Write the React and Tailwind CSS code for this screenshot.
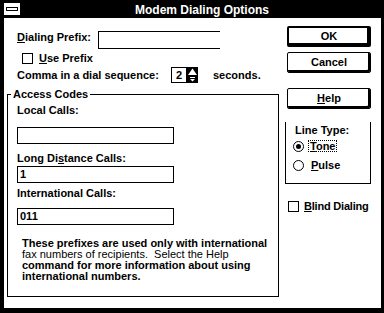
import React from "react";

const font = "font-['Liberation_Sans',Arial,sans-serif]";

function Check({ checked }) {
  return (
    <span className="block w-[11px] h-[11px] border border-black bg-white shrink-0">
      {checked ? "x" : null}
    </span>
  );
}

function Radio({ on }) {
  return (
    <span className="flex items-center justify-center w-[11px] h-[11px] rounded-full border border-black bg-white shrink-0">
      {on && <span className="block w-[5px] h-[5px] rounded-full bg-black" />}
    </span>
  );
}

function Button({ children, primary }) {
  return (
    <div
      className={`flex items-center justify-center w-[84px] h-[21px] rounded-[2px] border-black bg-white shadow-[inset_-2px_-2px_0_#000] text-[11px] font-bold ${
        primary ? "border-2" : "border"
      }`}
    >
      {children}
    </div>
  );
}

function Spinner() {
  return (
    <svg width="11" height="16" viewBox="0 0 11 16" className="block">
      <rect x="0" y="0" width="11" height="16" fill="#000" />
      <polygon points="5.5,1.5 10,8 1,8" fill="#fff" />
      <rect x="3" y="10" width="5" height="1" fill="#fff" />
      <polygon points="3,12 8,12 5.5,14.5" fill="#fff" />
    </svg>
  );
}

export default function App() {
  return (
    <div className={`w-[384px] h-[313px] bg-black flex flex-col text-black ${font}`}>
      {/* title bar */}
      <div className="h-[18px] flex items-center shrink-0">
        <div className="ml-[4px] w-[16px] h-[12px] bg-white flex items-center justify-center">
          <span className="block w-[12px] h-[4px] border border-black bg-white" />
        </div>
        <div className="flex-1 text-center text-white text-[12px] font-bold leading-[14px] pt-[1px]">
          Modem Dialing Options
        </div>
      </div>

      {/* body */}
      <div className="ml-[4px] mr-[3px] h-[290px] bg-white flex text-[11px] font-bold leading-[13px]">
        {/* left column */}
        <div className="w-[281px] pl-[3px] flex flex-col">
          <div className="flex items-start mt-[13px] pl-[10px]">
            <span className="w-[81px]">
              <u>D</u>ialing Prefix:
            </span>
            <div className="w-[122px] h-[18px] border-l border-t border-b border-black" />
          </div>

          <div className="flex items-center gap-[6px] mt-[4px] ml-[15px] h-[11px]">
            <Check />
            <span>
              <u>U</u>se Prefix
            </span>
          </div>

          <div className="flex items-center mt-[3px] pl-[10px] h-[16px]">
            <span className="w-[154px]">Comma in a dial sequence:</span>
            <div className="w-[16px] h-[16px] border border-black flex items-center justify-center">2</div>
            <Spinner />
            <span className="ml-[15px]">seconds.</span>
          </div>

          <div className="relative mt-[11px] w-[272px] h-[203px] border border-black pl-[9px] flex flex-col">
            <span className="absolute -top-[7px] left-[3px] bg-white px-[2px]">Access Codes</span>
            <span className="mt-[9px]">Local Calls:</span>
            <div className="mt-[10px] w-[157px] h-[17px] border border-black" />
            <span className="mt-[8px]">
              Long Di<u>s</u>tance Calls:
            </span>
            <div className="mt-[1px] w-[157px] h-[17px] border border-black flex items-center pl-[2px]">1</div>
            <span className="mt-[4px]">International Calls:</span>
            <div className="mt-[8px] w-[157px] h-[17px] border border-black flex items-center pl-[2px]">011</div>
            <p className="mt-[13px] ml-[5px] leading-[11px] whitespace-pre">
              These prefixes are used only with international
              {"\n"}
              <span className="font-normal">fax numbers of recipients.  Select the Help</span>
              {"\n"}
              command for more information about using
              {"\n"}
              international numbers.
            </p>
          </div>
        </div>

        {/* right column */}
        <div className="flex flex-col">
          <div className="ml-[2px] mt-[8px]">
            <Button primary>OK</Button>
          </div>
          <div className="ml-[2px] mt-[5px]">
            <Button>Cancel</Button>
          </div>
          <div className="ml-[2px] mt-[15px]">
            <Button>
              <span>
                <u>H</u>elp
              </span>
            </Button>
          </div>

          <div className="mt-[13px] w-[86px] h-[62px] border-l border-r border-b border-black flex flex-col">
            <span className="mt-[2px] ml-[9px]">Line Type:</span>
            <div className="flex items-center mt-[3px] ml-[7px] h-[12px]">
              <Radio on />
              <span className="ml-[4px] px-[1px] border border-dotted border-black leading-[10px]">
                <u>T</u>one
              </span>
            </div>
            <div className="flex items-center mt-[7px] ml-[7px] h-[12px]">
              <Radio />
              <span className="ml-[7px]">
                <u>P</u>ulse
              </span>
            </div>
          </div>

          <div className="flex items-center gap-[5px] mt-[17px] ml-[3px] h-[11px]">
            <Check />
            <span className="tracking-[-0.2px]">
              <u>B</u>lind Dialing
            </span>
          </div>
        </div>
      </div>
    </div>
  );
}
